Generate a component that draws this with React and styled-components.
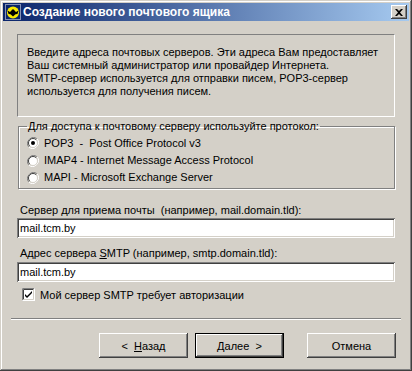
import React, { useState } from 'react'
import styled, { createGlobalStyle } from 'styled-components'

const Global = createGlobalStyle`
  html, body { margin: 0; padding: 0; background: #d4d0c8; }
  body { font-family: "Liberation Sans", Arial, sans-serif; font-size: 11px; color: #000; }
`

const Window = styled.div`
  width: 412px;
  height: 371px;
  box-sizing: border-box;
  padding: 3px;
  background: #d4d0c8;
  box-shadow: inset -1px -1px 0 #404040, inset 1px 1px 0 #d4d0c8,
    inset -2px -2px 0 #808080, inset 2px 2px 0 #ffffff;
  display: flex;
  flex-direction: column;
`

const TitleBar = styled.div`
  height: 18px;
  background: linear-gradient(to right, #0a246a, #a6caf0);
  display: flex;
  align-items: center;
  padding: 0 2px;
`

const Title = styled.div`
  flex: 1;
  margin-left: 2px;
  color: #fff;
  font-weight: bold;
  font-size: 12px;
  font-family: "Liberation Sans", Arial, sans-serif;
`

const CloseButton = styled.div`
  width: 16px;
  height: 14px;
  box-sizing: border-box;
  background: #d4d0c8;
  box-shadow: inset -1px -1px 0 #404040, inset 1px 1px 0 #ffffff,
    inset -2px -2px 0 #808080;
  display: flex;
  align-items: center;
  justify-content: center;
`

const Body = styled.div`
  flex: 1;
  padding: 13px 14px 0;
  display: flex;
  flex-direction: column;
`

const InfoBox = styled.div`
  height: 83px;
  box-sizing: border-box;
  border-top: 1px solid #808080;
  border-left: 1px solid #808080;
  border-bottom: 1px solid #fff;
  border-right: 1px solid #fff;
  padding: 11px 9px 0;
  line-height: 13px;
  white-space: pre;
`

const GroupBox = styled.fieldset`
  margin: 3px 0 0 1px;
  padding: 1px 8px 2px;
  min-width: 0;
  border: 1px solid #808080;
  box-shadow: inset 1px 1px 0 #ffffff, 1px 1px 0 #ffffff;
  display: flex;
  flex-direction: column;
`

const Legend = styled.legend`
  padding: 0 1px;
  margin-left: 0;
  line-height: 13px;
`

const RadioRow = styled.label`
  display: flex;
  align-items: center;
  height: ${p => p.$h}px;
  gap: 5px;
  white-space: pre;
  line-height: 13px;
`

const FieldLabel = styled.div`
  line-height: 13px;
  white-space: pre;
  margin: ${p => p.$top}px 0 0 3px;
`

const TextInput = styled.input`
  display: block;
  width: 378px;
  height: 20px;
  box-sizing: border-box;
  margin: ${p => p.$top}px 0 0;
  padding: 0 0 0 3px;
  font: inherit;
  border: none;
  background: #fff;
  box-shadow: inset 1px 1px 0 #808080, inset -1px -1px 0 #ffffff,
    inset 2px 2px 0 #404040, inset -2px -2px 0 #d4d0c8;
  outline: none;
`

const CheckRow = styled.label`
  display: flex;
  align-items: center;
  gap: 5px;
  margin: 6px 0 0 5px;
  height: 13px;
`

const Separator = styled.div`
  margin: 17px -6px 0 -6px;
  height: 0;
  border-top: 1px solid #808080;
  border-bottom: 1px solid #ffffff;
`

const ButtonRow = styled.div`
  display: flex;
  justify-content: flex-end;
  margin: 13px -1px 0 0;
`

const Button = styled.button`
  width: 89px;
  height: 25px;
  margin-left: ${p => p.$gap}px;
  box-sizing: border-box;
  font: inherit;
  color: #000;
  background: #d4d0c8;
  border: ${p => (p.$default ? '1px solid #000' : 'none')};
  box-shadow: inset -1px -1px 0 #404040, inset 1px 1px 0 #ffffff,
    inset -2px -2px 0 #808080;
  padding: 0;
  white-space: pre;
`

function BatIcon() {
  return (
    <svg width="16" height="16" viewBox="0 0 16 16">
      <rect x="0.5" y="0.5" width="15" height="15" fill="#0a246a" stroke="#fff" strokeDasharray="1 1" />
      <circle cx="8" cy="8.5" r="6" fill="#f8e800" />
      <path d="M2.5 6.5 L5 8 L6.5 6.5 L7.3 5 L8 6.3 L8.7 5 L9.5 6.5 L11 8 L13.5 6.5 L12.5 10 L10.5 10.2 L8 12.5 L5.5 10.2 L3.5 10 Z" fill="#000" />
    </svg>
  )
}

function Radio({ checked }) {
  return (
    <svg width="12" height="12" viewBox="0 0 12 12">
      <path d="M10.2 1.8 A6 6 0 0 0 1.8 10.2" stroke="#808080" fill="none" />
      <path d="M1.8 10.2 A6 6 0 0 0 10.2 1.8" stroke="#fff" fill="none" />
      <circle cx="6" cy="6" r="4.5" fill="#fff" />
      <path d="M9.2 2.8 A4.5 4.5 0 0 0 2.8 9.2" stroke="#404040" fill="none" />
      <path d="M2.8 9.2 A4.5 4.5 0 0 0 9.2 2.8" stroke="#d4d0c8" fill="none" />
      {checked && <circle cx="6" cy="6" r="2" fill="#000" />}
    </svg>
  )
}

function Check() {
  return (
    <svg width="13" height="13" viewBox="0 0 13 13">
      <rect x="0" y="0" width="13" height="13" fill="#fff" />
      <path d="M0.5 12.5 V0.5 H12.5" stroke="#808080" fill="none" />
      <path d="M1.5 11.5 V1.5 H11.5" stroke="#404040" fill="none" />
      <path d="M0.5 12.5 H12.5 V0.5" stroke="#fff" fill="none" />
      <path d="M1.5 11.5 H11.5 V1.5" stroke="#d4d0c8" fill="none" />
      <path d="M3 6 L5 8 L10 3 V5 L5 10 L3 8 Z" fill="#000" />
    </svg>
  )
}

export default function App() {
  const [proto, setProto] = useState('pop3')
  const [incoming, setIncoming] = useState('mail.tcm.by')
  const [smtp, setSmtp] = useState('mail.tcm.by')

  return (
    <Window>
      <Global />
      <TitleBar>
        <BatIcon />
        <Title>Создание нового почтового ящика</Title>
        <CloseButton>
          <svg width="8" height="7" viewBox="0 0 8 7">
            <path d="M0 0 L2 0 L4 2 L6 0 L8 0 L5 3.5 L8 7 L6 7 L4 5 L2 7 L0 7 L3 3.5 Z" fill="#000" />
          </svg>
        </CloseButton>
      </TitleBar>
      <Body>
        <InfoBox>
          {'Введите адреса почтовых серверов. Эти адреса Вам предоставляет\nВаш системный администратор или провайдер Интернета.\nSMTP-сервер используется для отправки писем, POP3-сервер\nиспользуется для получения писем.'}
        </InfoBox>
        <GroupBox>
          <Legend><u>Д</u>ля доступа к почтовому серверу используйте протокол:</Legend>
          <RadioRow $h={18} onClick={() => setProto('pop3')}>
            <Radio checked={proto === 'pop3'} />POP3  -  Post Office Protocol v3
          </RadioRow>
          <RadioRow $h={17} onClick={() => setProto('imap4')}>
            <Radio checked={proto === 'imap4'} />IMAP4 - Internet Message Access Protocol
          </RadioRow>
          <RadioRow $h={17} onClick={() => setProto('mapi')}>
            <Radio checked={proto === 'mapi'} />MAPI - Microsoft Exchange Server
          </RadioRow>
        </GroupBox>
        <FieldLabel $top={15}>Сервер для приема почты  (например, mail.domain.tld):</FieldLabel>
        <TextInput $top={1} value={incoming} onChange={e => setIncoming(e.target.value)} />
        <FieldLabel $top={9}>Адрес сервера <u>S</u>MTP (например, smtp.domain.tld):</FieldLabel>
        <TextInput $top={2} value={smtp} onChange={e => setSmtp(e.target.value)} />
        <CheckRow>
          <Check />
          Мой сервер SMTP требует авторизации
        </CheckRow>
        <Separator />
        <ButtonRow>
          <Button $gap={0}>{'<  '}<u>Н</u>азад</Button>
          <Button $gap={7} $default><u>Д</u>алее{'  >'}</Button>
          <Button $gap={23}>Отмена</Button>
        </ButtonRow>
      </Body>
    </Window>
  )
}
